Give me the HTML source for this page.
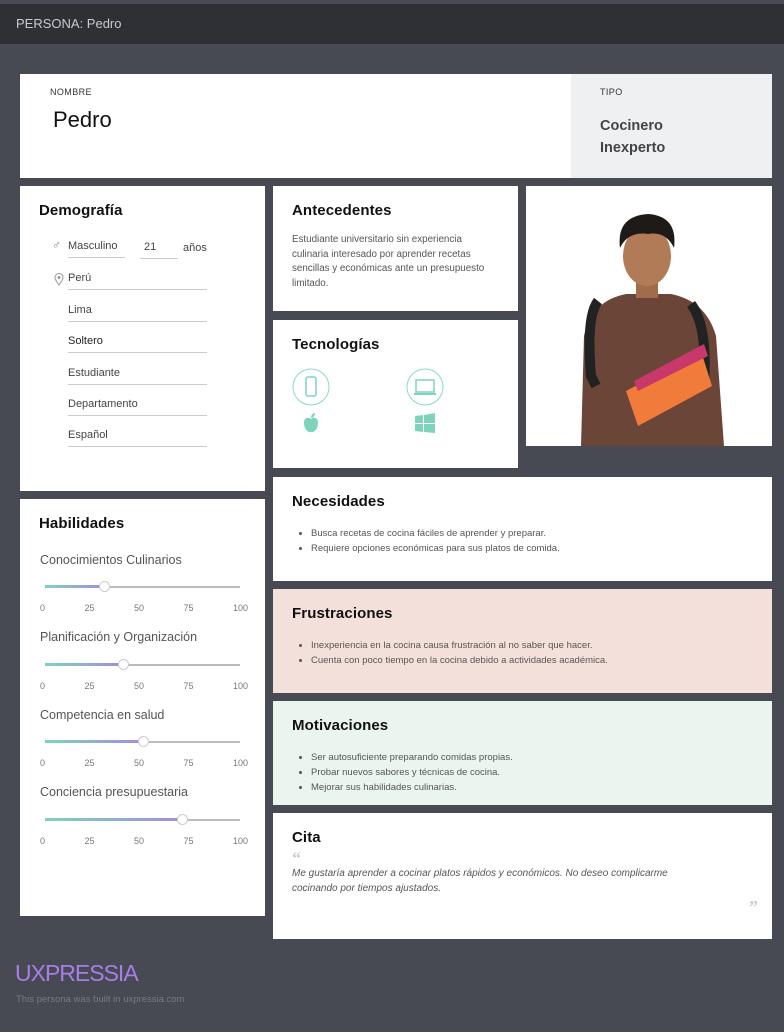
<!DOCTYPE html>
<html><head><meta charset="utf-8"><style>
*{box-sizing:border-box;margin:0;padding:0}
body{width:784px;height:1032px;background:#474a52;font-family:"Liberation Sans",sans-serif;position:relative;overflow:hidden;color:#222}
.hdr{position:absolute;left:0;top:4px;width:784px;height:40px;background:#2e3035;color:#c9cace;font-size:13px;padding:12px 16px}
.c{position:absolute;background:#fff}
h2{font-size:15px;font-weight:bold;color:#111;letter-spacing:.1px}
.lbl{font-size:9px;color:#333;letter-spacing:.4px}
.f{position:absolute;font-size:11px;color:#444;border-bottom:1px solid #ccc;padding-bottom:5px}
.p{font-size:10px;color:#555;line-height:15px}
ul{font-size:9.5px;color:#555;line-height:15px;padding-left:38px;margin-top:18px}
.sk{position:absolute;left:20px;font-size:12.5px;color:#555}
.tr{position:absolute;left:25px;width:195px;height:2px;background:#bbb}
.fill{position:absolute;left:0;top:-1px;height:3px;background:linear-gradient(90deg,#7fd3bd,#a48be0)}
.kn{position:absolute;top:-5px;width:11px;height:11px;border-radius:50%;background:#fff;border:1px solid #ccc}
.tk{position:absolute;left:20px;width:208px;font-size:9px;color:#777;display:flex;justify-content:space-between}
</style></head><body>
<div class="hdr">PERSONA: Pedro</div>

<div class="c" style="left:20px;top:74px;width:551px;height:104px">
<div class="lbl" style="position:absolute;left:30px;top:13px">NOMBRE</div>
<div style="position:absolute;left:33px;top:33px;font-size:22px;color:#111">Pedro</div></div>
<div class="c" style="left:571px;top:74px;width:201px;height:104px;background:#eff0f2">
<div class="lbl" style="position:absolute;left:29px;top:13px">TIPO</div>
<div style="position:absolute;left:29px;top:41px;font-size:14.5px;font-weight:bold;color:#444;line-height:22px">Cocinero<br>Inexperto</div></div>

<div class="c" style="left:20px;top:186px;width:245px;height:305px">
<h2 style="position:absolute;left:19px;top:16px">Demografía</h2>
<span style="position:absolute;left:32px;top:52px;font-size:12px;color:#888">♂</span>
<div class="f" style="left:48px;top:54px;width:57px">Masculino</div>
<div class="f" style="left:120px;top:55px;width:38px;padding-left:4px">21</div>
<div style="position:absolute;left:163px;top:56px;font-size:11px;color:#444">años</div>
<svg style="position:absolute;left:34px;top:87px" width="10" height="13" viewBox="0 0 10 13"><path d="M5 12C2 8 1 6 1 4.5a4 4 0 018 0C9 6 8 8 5 12z" fill="none" stroke="#999"/><circle cx="5" cy="4.5" r="1.5" fill="#999"/></svg>
<div class="f" style="left:48px;top:86px;width:139px">Perú</div>
<div class="f" style="left:48px;top:118px;width:139px">Lima</div>
<div class="f" style="left:48px;top:149px;width:139px;color:#222">Soltero</div>
<div class="f" style="left:48px;top:181px;width:139px">Estudiante</div>
<div class="f" style="left:48px;top:212px;width:139px">Departamento</div>
<div class="f" style="left:48px;top:243px;width:139px">Español</div>
</div>

<div class="c" style="left:20px;top:499px;width:245px;height:417px">
<h2 style="position:absolute;left:19px;top:16px">Habilidades</h2>
<div class="sk" style="top:54px">Conocimientos Culinarios</div>
<div class="tr" style="top:87px"><div class="fill" style="width:59px"></div><div class="kn" style="left:54px"></div></div>
<div class="tk" style="top:104px"><span>0</span><span>25</span><span>50</span><span>75</span><span>100</span></div>
<div class="sk" style="top:131px">Planificación y Organización</div>
<div class="tr" style="top:165px"><div class="fill" style="width:78px"></div><div class="kn" style="left:73px"></div></div>
<div class="tk" style="top:182px"><span>0</span><span>25</span><span>50</span><span>75</span><span>100</span></div>
<div class="sk" style="top:209px">Competencia en salud</div>
<div class="tr" style="top:242px"><div class="fill" style="width:98px"></div><div class="kn" style="left:93px"></div></div>
<div class="tk" style="top:259px"><span>0</span><span>25</span><span>50</span><span>75</span><span>100</span></div>
<div class="sk" style="top:286px">Conciencia presupuestaria</div>
<div class="tr" style="top:320px"><div class="fill" style="width:137px"></div><div class="kn" style="left:132px"></div></div>
<div class="tk" style="top:337px"><span>0</span><span>25</span><span>50</span><span>75</span><span>100</span></div>
</div>

<div class="c" style="left:273px;top:186px;width:245px;height:125px;padding:16px 19px">
<h2>Antecedentes</h2>
<div class="p" style="margin-top:14px;font-size:9.8px;line-height:14.5px">Estudiante universitario sin experiencia culinaria interesado por aprender recetas sencillas y económicas ante un presupuesto limitado.</div></div>

<div class="c" style="left:273px;top:320px;width:245px;height:148px">
<h2 style="position:absolute;left:19px;top:16px">Tecnologías</h2>
<svg style="position:absolute;left:19px;top:48px" width="38" height="38"><circle cx="19" cy="19" r="18" fill="none" stroke="#8fd8c2"/><rect x="14" y="9" width="10" height="19" rx="2" fill="none" stroke="#7fd3bd" stroke-width="1.5"/></svg>
<svg style="position:absolute;left:133px;top:48px" width="38" height="38"><circle cx="19" cy="19" r="18" fill="none" stroke="#8fd8c2"/><rect x="10" y="12" width="18" height="12" fill="none" stroke="#7fd3bd" stroke-width="1.5"/><rect x="8" y="25" width="22" height="2" fill="#7fd3bd"/></svg>
<svg style="position:absolute;left:30px;top:92px" width="16" height="22" viewBox="0 0 16 22"><path d="M8 7C6 5 1 5 1 11s4 10 7 9c3 1 7-3 7-9S10 5 8 7z" fill="#7fd3bd"/><path d="M8 6C8 3 10 1 12 1C12 4 10 6 8 6z" fill="#7fd3bd"/></svg>
<svg style="position:absolute;left:142px;top:93px" width="20" height="20"><path d="M0 3l8-1v8H0zM9 2l11-2v10H9zM0 11h8v8l-8-1zM9 11h11v9l-11-1z" fill="#7fd3bd"/></svg>
</div>

<div class="c" style="left:526px;top:186px;width:246px;height:260px;overflow:hidden">
<svg width="246" height="260">
<path d="M55 260L58 150Q65 115 100 108L145 108Q180 115 190 150L198 260Z" fill="#6b4538"/>
<path d="M72 115Q60 130 65 190L70 200" stroke="#222" stroke-width="10" fill="none"/>
<path d="M165 118Q182 140 178 200" stroke="#222" stroke-width="10" fill="none"/>
<rect x="110" y="90" width="22" height="22" fill="#a06c4c"/>
<ellipse cx="121" cy="70" rx="24" ry="30" fill="#b27b58"/>
<path d="M94 62Q90 30 122 28Q152 30 148 62Q140 45 122 48Q102 45 94 62Z" fill="#1e1a18"/>
<path d="M100 205L175 165L186 200L112 240Z" fill="#f07b3a"/>
<path d="M108 195L178 158L182 170L112 205Z" fill="#c8386a"/>
</svg></div>

<div class="c" style="left:273px;top:477px;width:499px;height:104px;padding:16px 19px">
<h2>Necesidades</h2>
<ul style="margin-left:-19px;margin-top:16px"><li>Busca recetas de cocina fáciles de aprender y preparar.</li><li>Requiere opciones económicas para sus platos de comida.</li></ul></div>

<div class="c" style="left:273px;top:589px;width:499px;height:104px;padding:16px 19px;background:#f4e0da">
<h2>Frustraciones</h2>
<ul style="margin-left:-19px;margin-top:16px"><li>Inexperiencia en la cocina causa frustración al no saber que hacer.</li><li>Cuenta con poco tiempo en la cocina debido a actividades académica.</li></ul></div>

<div class="c" style="left:273px;top:701px;width:499px;height:104px;padding:16px 19px;background:#eaf5f0">
<h2>Motivaciones</h2>
<ul style="margin-left:-19px;margin-top:16px"><li>Ser autosuficiente preparando comidas propias.</li><li>Probar nuevos sabores y técnicas de cocina.</li><li>Mejorar sus habilidades culinarias.</li></ul></div>

<div class="c" style="left:273px;top:813px;width:499px;height:126px;padding:16px 19px">
<h2>Cita</h2>
<div style="font-size:18px;color:#ccc;font-weight:bold;line-height:12px;margin-top:6px;font-family:'Liberation Serif',serif">“</div>
<div class="p" style="font-style:italic;font-size:10px;margin-top:2px;width:420px">Me gustaría aprender a cocinar platos rápidos y económicos. No deseo complicarme cocinando por tiempos ajustados.</div>
<div style="position:absolute;right:14px;top:84px;font-size:18px;color:#ccc;font-weight:bold;font-family:'Liberation Serif',serif">”</div></div>

<div style="position:absolute;left:15px;top:960px;font-size:23px;color:#a77ee8;letter-spacing:-1px">UXPRESSIA</div>
<div style="position:absolute;left:16px;top:994px;font-size:9.5px;color:#777a80">This persona was built in uxpressia.com</div>
</body></html>
